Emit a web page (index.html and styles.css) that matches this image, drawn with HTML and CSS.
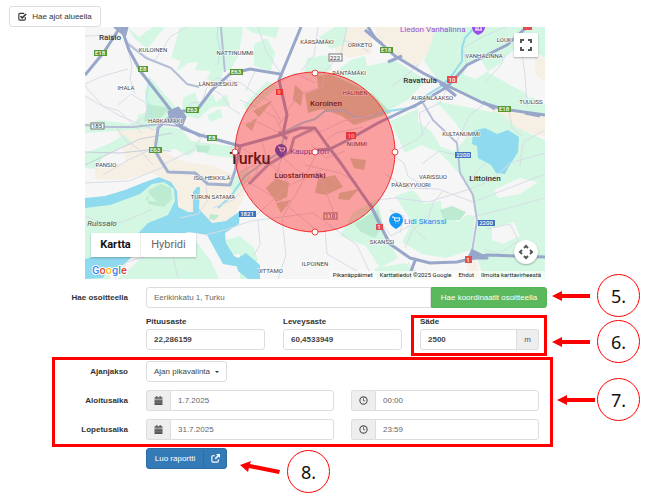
FILE: index.html
```html
<!DOCTYPE html>
<html lang="fi">
<head>
<meta charset="utf-8">
<meta name="viewport" content="width=device-width, initial-scale=1">
<title>Hae ajot alueella</title>
<link rel="stylesheet" href="styles.css">
</head>
<body>
<main class="page">
  <button type="button" class="btn btn-area">
    <svg class="icon" viewBox="0 0 16 16" aria-hidden="true"><path d="M13 9v3.500a2 2 0 0 1-2 2H3.500a2 2 0 0 1-2-2V4.500a2 2 0 0 1 2-2H11" fill="none" stroke="currentColor" stroke-width="2"/><path d="M4.500 7.500l3 3L14.500 3.500" fill="none" stroke="currentColor" stroke-width="2.800"/></svg>
    Hae ajot alueella
  </button>

  <section class="map" aria-label="Kartta">
    <svg class="map-canvas" viewBox="85 27 460 252" role="img" aria-label="Turku">
      <rect class="land" x="85" y="27" width="460" height="252"/>
      <!-- built-up areas -->
      <g class="sand">
        <path d="M117 129l39-3 1 22 28 14 30 4 25 12 5 18-13 24-25 3-28-13-7-27-20-10-32 7-25-1 0-13 32-3z"/>
        <path d="M341 27l32 0 22 22 30-22-53 0 0 26-24 5-13-8z"/>
        <path d="M384 27h52l-1 18-18 22-27-14-17-18z"/>
        <path d="M485 105l60 10v22l-35-10zM535 56l10 3v23l-10-8z"/>
        <path d="M206 77l14 0 2 8-12 3zM430 187l12-2 2 8-12 2zM466 260l10 0 4 19-10 0z"/>
      </g>
      <!-- woods and parks -->
      <g class="green">
        <path d="M180 27h63l-4 27-8 15-8 3-3 10-12-2 2-9-15-1 3-8-10 1-12 9 5-11-10-3z"/>
        <path d="M127 27l12 10 14-10h12l-18 22-13-11z"/>
        <path d="M149 76l28 33-2 14-12 0-13 5-15-1 3-12 9-3-2-20z"/>
        <path d="M156 126l25 3 10 12 47 6-4 11-26-3-9-6-11 7-13-7-18 2z"/>
        <path d="M183 98l12-6 4 12 14-10 3 8 11-8 3 12-18 1-14 12-16-4zM207 115l13-6 3 8-13 5z"/>
        <path d="M85 124l15-4 28 4 25-4 3 8-71 5z"/>
        <path d="M85 153l21-8 19-10 7 7-29 14-6 13-12-1z"/>
        <path d="M254 44l13-6 8 15-4 18-17-5zM245 27l34 0-3 11-23-5zM267 81l11 6-14 12-17 14-3-8zM319 37l16-10 12 0-2 17-14 5zM351 60l14-4 3 16-22 6-7-9z"/>
        <path d="M307 58l20-3 5 14-15 9-13-5z"/>
        <path d="M340 73l54-13 32 20-18 20-30 16-32-6-12-21z"/>
        <path d="M436 27h109v31l-18-11-40 25 58 32v11l-46-8-57-21-18-25 6-14z"/>
        <path d="M390 121l46-20 66 13 15 14 28 12v139h-61l-10-30 5-30-12-37-27-29-18-8-17 8z"/>
        <path d="M353 213l24-14 8 34 13 25-18 10-14-22-26-10z"/>
        <path d="M375 268l30-5 20 16h-49zM85 232l14 2 11 8v37H85z"/>
        <path d="M225 240l15-4v18l-9 1zM240 236l14 12 4 12-10 19h-8zM238 173l10-7 2 12-15 16-5-7z"/>
        <path d="M395 196l18-6 12 14 20-4 10 12 20 4-4 34-25 8-24-4-20-12 10-20z"/>
      </g>
      <!-- neighbourhoods inside the eastern woods -->
      <g class="land">
        <path d="M418 108l16-8 18 18 14 20-12 14-14-6-8-14-14-10zM466 65l14-6 8 12-12 8-12-4zM500 62l16-14 14 10-4 12-16 4zM524 78l14 4 2 14-12 2zM440 196l16 4 12 14-10 8-16-12zM492 228l22-6 6 14-18 8-10-4zM400 160l22-4 12 16 22-2 8 14-24 10-34-4-8-14zM494 190l26-12 18 4-18 12-22 4z"/>
      </g>
      <!-- sea, lakes -->
      <g class="water">
        <path d="M85 198l20-2 20-6 20-8 14-5 12 5 6 9 1 16 10 5 6 0-1-15 4-10 2 0 0 22 13 14 14-2 14-10-1 13-14 9 1 10 8 13 12 6v6l-23-4-16-29-18-3-18 4-28 11-20 18-38 14z"/>
        <path d="M193 192l4-5h3l-1 21-6 5zM473 131l12-3 12 6 11-4 11 7-1 15-10 16-3 6-9-1-5-8-13-7-1-12-5-2zM85 258l14-6 14 6-10 20-18 1zM235 260l11-7 14 12 0 14h-12l-10-8z"/>
      </g>
      <path class="green" d="M85 208l25-3 30-11 12-10 12-2 10 7 1 12-7 14-20 8-23 24-40 12zM118 279l27-24 15-14 25-5 12 7 14 18 8 18z"/>
      <path class="wood" d="M149 190l12-6 10 4 1 11-8 8-16-3zM147 104l23 4-9 10-17 4zM196 145l14 1-2 7-11-1zM157 202l-8-8-4 6zM440 210l12-4 14 6-6 8-16 0zM354 224l24-15 5 16-8 13-14-6zM210 214l9 1-4 5-6-1z"/>
      <g class="wood olive">
        <path d="M317 76l13-2 43 20 18 19-37 12-12-9-20-7-14 4-3-19 13-5zM295 85l8 7-2 14-8-6zM253 111l20-11-14 17zM318 179l17-4 8 12-17 8-11-2zM339 193l20-4-10 11-11-1zM266 188l10-10 13 5-2 14-11 5zM276 203l15-3-10 13zM245 125l12-7-5 13zM350 158l16 2-2 10-10-2z"/>
      </g>
      <path class="river" d="M475 27l-10 11-3 10 0 13-12 17-10 9-13 8-12 12-32 5-13 5-15 0-12-7-18 1-10 8-13 4-16 8-7 22-16 10-18 13-14 20-13 12"/>
      <path class="river stream" d="M218 27l-1 9 3 14-2 15M150 79l-4 20 6 10-3 15"/>
      <!-- minor streets -->
      <g class="street">
        <path d="M85 36l33-1M128 42l20 16 22 9 18 18 18 1 11-8 24 5 13 10 15 8 12 20M155 60l7-10 8-13 17-10M85 86l18 20 16 5 23 22M85 96l35 20 35 14M128 49l4 17-2 13 5 15M118 105l13-11 15 9 1 12-12 8M180 118l12-15 10-1 5-15M213 90l9 5 7 12 11 7M85 84l18-8 25-7M117 128l8 12 15 10 13 15M103 175l27-16 22-10 10 16 31-15 12-18M85 183l44-2 37-15M205 180l3 20-10 14-18 4M213 208l20-8 18-19M235 166l-4-20"/>
        <path d="M258 27l8 24 18 27M318 27l-4 28-13 16M347 27l-6 27-17 18-1 15-25 8-19 30M342 40l16 4 11 8M280 82l15-9 20 10M240 100l18 8 17 9 8 16M246 91l9-20M240 172l38-19 20 18 24 9 12 34M247 181l38 23 29 24M255 216l35-31 33-16M240 156l28 3 20 20M290 129l-16 54M301 133l22-2 20-10 31-6M305 165l35 8 18 10M318 150l-15 31-20 35M322 143l14-10 27-6M283 134l-26-12-11 1M235 144l25 15-4 15-15 12M262 142l6 20 23 23M311 145l15 13 19-7"/>
        <path d="M85 216l20 8 18-2 30-13M115 279l12-17 24-7 25-17 22 8M178 279l-5-23 18-15M205 235l20-5 26-9 62-8 44 32 14 30M282 219l4 36-8 24M325 230l2 24 30 17M258 220l2 25-6 10M385 174l22 14 31 1 35 13 72-28M390 153l14 10 4 13 20 13M377 200l18-2 33 4 39-12 25-10 18-17 35-10M475 216l22-5 48-13M405 248l8-19 15-10 5-16 10-12M371 210l20 26 20-11 15 15M408 263l15 16M390 210l14 6-4 17"/>
        <path d="M391 87l17-13 11-10M467 67l-4-19 21-12 22-9M485 82l15-16 6-12M522 53l3 22 2 31M447 88l-7 15-21 10 4 23M456 143l14-28 13-10M430 121l-12 18-19 10M509 111l3 17 10 8M457 155l-18-4-17 13M465 185l20-22M487 229l23-5 7 14M484 249l15 5 20-14M545 130l-22 12-3 24"/>
      </g>
      <path class="road thin" d="M85 152l35 1 28-3 23 1M85 165l55-26 32-6"/>
      <path class="road mid" d="M85 125l23 2 25 0 28-3 24 3 15 10M128 44l18 14 25 10 16 16 12 3M423 103l10 17 24 23 3 30 13 22 4 25-5 32M221 27l2 25 2 20"/>
      <!-- main roads -->
      <g class="road">
        <path class="secondary" d="M170 117l-12 11-3 22 5 9 8 13 27 1 13 11 22 1 5-14 5-24M315 128l-21 10-4 14-21 12-20 20"/>
        <path d="M121 27l8 23 12 22 32 41 9 15 18 7 40 11 43-12 17-6 15 0 12 17 13 17 32 46 8 17 10 19 20 14 20 5 27-1 30-7 58 2"/>
        <path d="M119 29l-15 23-19 23M172 112l25-2 15-20 18-16 20-5 30 5M301 27l-22 53 8 35-4 19M368 27l7 11 20 18 28 17 27 14 33 16 20 6 42 6M527 27l-20 18-40 20-20 22-27 16-42 20-30 17-18 9-13 1"/>
        <path class="junction" d="M115 27h12l-2 8zM169 112l9-4 7 9-4 10-10-8zM365 30l17 14M388 62l14-6M440 83l16 13M483 102l12 7M279 132l8 7M370 204l12 24M467 258l20 0-16-8M416 258l-5 13M525 113l15 3"/>
      </g>
      <!-- road shields -->
      <g class="e-road"><rect x="94" y="50" width="13" height="6"/><rect x="138" y="66" width="10" height="6"/><rect x="186" y="107" width="13" height="6"/><rect x="230" y="69" width="13" height="6"/><rect x="207" y="135" width="10" height="6"/><rect x="149" y="147" width="13" height="6"/><rect x="380" y="47" width="13" height="6"/><rect x="498" y="106" width="13" height="6"/></g>
      <g class="main-road"><rect x="276" y="89" width="7" height="6"/><rect x="346" y="132" width="10" height="7"/><rect x="447" y="76" width="10" height="7"/><rect x="523" y="24" width="9" height="6"/><rect x="376" y="224" width="7" height="6"/><rect x="465" y="256" width="7" height="7"/></g>
      <g class="region-road"><rect x="239" y="211" width="17" height="6"/><rect x="455" y="152" width="16" height="6"/><rect x="478" y="220" width="17" height="6"/></g>
      <g class="local-road"><rect x="91" y="123" width="13" height="6"/><rect x="329" y="54" width="13" height="7"/><rect x="324" y="213" width="13" height="6"/></g>
      <g class="shield-text">
        <text x="100" y="55">E18</text><text x="143" y="71">E8</text><text x="192" y="112">E63</text><text x="236" y="74">E63</text><text x="212" y="140">E8</text><text x="155" y="152">E63</text><text x="386" y="52">E18</text><text x="504" y="111">E18</text>
        <text x="279" y="94">9</text><text x="351" y="138">10</text><text x="452" y="82">10</text><text x="379" y="229">1</text><text x="468" y="262">1</text>
        <text x="247" y="216">1821</text><text x="463" y="157">2200</text><text x="486" y="225">2200</text>
      </g>
      <g class="shield-text dark"><text x="97" y="128">185</text><text x="335" y="60">222</text><text x="330" y="218">110</text></g>
      <!-- place names -->
      <g class="district">
        <text x="153" y="52">KULOINEN</text><text x="235" y="55">NÄTTINUMMI</text><text x="126" y="90">IHALA</text><text x="218" y="86">LÄNSIKESKUS</text><text x="165" y="123">HÄRKÄMÄKI</text>
        <text x="317" y="44">KÄRSÄMÄKI</text><text x="360" y="47">ORIKETO</text><text x="349" y="75">RÄNTÄMÄKI</text><text x="355" y="95">HALINEN</text><text x="357" y="146">NUMMI</text>
        <text x="505" y="42">LOUKI</text><text x="484" y="58">VANHALINNA</text><text x="432" y="100">AURANLAAKSO</text><text x="531" y="104">TUULISS</text><text x="461" y="136">KULTANUMMI</text>
        <text x="106" y="167">PANSIO</text><text x="212" y="180">ISO-HEIKKILÄ</text><text x="213" y="199">TURUN SATAMA</text><text x="433" y="179">VARISSUO</text><text x="411" y="187">PÄÄSKYVUORI</text><text x="382" y="244">SKANSSI</text><text x="315" y="266">ILPOINEN</text><text x="270" y="273">UITTAMO</text>
      </g>
      <g class="town"><text x="110" y="40">Raisio</text><text x="326" y="106">Koroinen</text><text x="300" y="178">Luostarinmäki</text><text x="420" y="83">Ravattula</text><text x="485" y="181">Littoinen</text><text x="102" y="226" class="island">Ruissalo</text></g>
      <text class="city" x="250" y="164">Turku</text>
      <g class="poi">
        <text x="290" y="154" class="market">Kauppatori</text><text x="404" y="224" class="shop">Lidl Skanssi</text><text x="400" y="32" class="sight">Liedon Vanhalinna</text>
      </g>
      <g class="pins">
        <path d="M275 150a6 6 0 1 1 12 0q0 4-6 8-6-4-6-8z" fill="#3d5ccc"/><path class="glyph" d="M278 147h1.500l1 4h3.500l1-3h-5M281 153h.5M284 153h.5"/>
        <path d="M389 220a7 7 0 1 1 14 0q0 5-7 9-7-4-7-9z" fill="#1399f5"/><path class="glyph" d="M392 217h2l1 4h4l1-3h-6M395 223h.5M398 223h.5"/>
        <path d="M472 27h13q0 5-7 8-6-3-6-8z" fill="#9a4ee8"/><path class="glyph" d="M475 30h7M476 27v3M478 27v3M481 27v3"/>
      </g>
      <circle class="area" cx="315" cy="152" r="80"/>
      <g class="handles"><circle cx="315" cy="73" r="3"/><circle cx="395" cy="152" r="3"/><circle cx="315" cy="232" r="3"/><circle cx="235" cy="152" r="3"/><circle cx="315" cy="152" r="3"/></g>
      <text class="google" x="92" y="274"><tspan fill="#4285f4">G</tspan><tspan fill="#ea4335">o</tspan><tspan fill="#fbbc05">o</tspan><tspan fill="#4285f4">g</tspan><tspan fill="#34a853">l</tspan><tspan fill="#ea4335">e</tspan></text>
    </svg>
    <div class="map-type"><button type="button" class="active">Kartta</button><button type="button">Hybridi</button></div>
    <button type="button" class="map-full" aria-label="Koko näyttö"><svg viewBox="0 0 12 12"><path d="M1 4V1h3M8 1h3v3M11 8v3H8M4 11H1V8" fill="none" stroke="#555" stroke-width="2"/></svg></button>
    <button type="button" class="map-pan" aria-label="Siirrä karttaa"><svg viewBox="0 0 16 16"><path d="M6 4l2-2 2 2M6 12l2 2 2-2M4 6L2 8l2 2M12 6l2 2-2 2" fill="none" stroke="#555" stroke-width="2"/></svg></button>
    <div class="map-legal"><button type="button">Pikanäppäimet</button><span>Karttatiedot ©2025 Google</span><a href="#ehdot">Ehdot</a><a href="#virhe">Ilmoita karttavirheestä</a></div>
  </section>

  <form class="report">
    <div class="row">
      <label class="row-label" for="address">Hae osoitteella</label>
      <div class="group wide">
        <input id="address" type="text" value="Eerikinkatu 1, Turku">
        <button type="button" class="btn btn-green">Hae koordinaatit osoitteella</button>
      </div>
      <div class="callout callout-five"><svg class="arrow" viewBox="0 0 38 10" aria-hidden="true"><path d="M0 5L10 0V3H38V7H10V10z"/></svg><span class="number">5.</span></div>
    </div>

    <div class="row coords">
      <div class="thirds">
        <div class="field"><label for="lon">Pituusaste</label><input id="lon" type="text" value="22,286159"></div>
        <div class="field"><label for="lat">Leveysaste</label><input id="lat" type="text" value="60,4533949"></div>
        <div class="field marked"><label for="radius">Säde</label><div class="group"><input id="radius" type="text" value="2500"><span class="addon unit">m</span></div></div>
      </div>
      <div class="callout callout-six"><svg class="arrow" viewBox="0 0 38 10" aria-hidden="true"><path d="M0 5L10 0V3H38V7H10V10z"/></svg><span class="number">6.</span></div>
    </div>

    <div class="period">
      <div class="row">
        <label class="row-label" for="quick">Ajanjakso</label>
        <div class="select"><select id="quick"><option>Ajan pikavalinta</option></select></div>
      </div>
      <div class="row">
        <label class="row-label" for="start">Aloitusaika</label>
        <div class="halves">
          <div class="group"><span class="addon"><svg class="icon" viewBox="0 0 16 16" aria-hidden="true"><path d="M1 2h3V0h2v2h4V0h2v2h3v3H1zM1 6h14v10H1z"/><path d="M1 8.500h14M1 12h14" stroke="#999"/></svg></span><input id="start" type="text" value="1.7.2025"></div>
          <div class="group"><span class="addon"><svg class="icon" viewBox="0 0 16 16" aria-hidden="true"><circle cx="8" cy="8" r="6.500" fill="none" stroke="currentColor" stroke-width="2"/><path d="M8 4v4.500h3" fill="none" stroke="currentColor" stroke-width="1.500"/></svg></span><input type="text" aria-label="Aloitusaika, kello" value="00:00"></div>
        </div>
        <div class="callout callout-seven"><svg class="arrow" viewBox="0 0 38 10" aria-hidden="true"><path d="M0 5L10 0V3H38V7H10V10z"/></svg><span class="number">7.</span></div>
      </div>
      <div class="row">
        <label class="row-label" for="end">Lopetusaika</label>
        <div class="halves">
          <div class="group"><span class="addon"><svg class="icon" viewBox="0 0 16 16" aria-hidden="true"><path d="M1 2h3V0h2v2h4V0h2v2h3v3H1zM1 6h14v10H1z"/><path d="M1 8.500h14M1 12h14" stroke="#999"/></svg></span><input id="end" type="text" value="31.7.2025"></div>
          <div class="group"><span class="addon"><svg class="icon" viewBox="0 0 16 16" aria-hidden="true"><circle cx="8" cy="8" r="6.500" fill="none" stroke="currentColor" stroke-width="2"/><path d="M8 4v4.500h3" fill="none" stroke="currentColor" stroke-width="1.500"/></svg></span><input type="text" aria-label="Lopetusaika, kello" value="23:59"></div>
        </div>
      </div>
    </div>

    <div class="row actions">
      <div class="group">
        <button type="submit" class="btn btn-blue">Luo raportti</button>
        <button type="button" class="btn btn-blue btn-open" aria-label="Avaa uuteen ikkunaan"><svg class="icon" viewBox="0 0 16 16" aria-hidden="true"><path d="M13 9.500v3a2 2 0 0 1-2 2H3.500a2 2 0 0 1-2-2V5a2 2 0 0 1 2-2H7" fill="none" stroke="currentColor" stroke-width="2"/><path d="M9 0h7v7l-2.500-2.500L8.500 9.500l-2-2 5-5z" fill="currentColor"/></svg></button>
      </div>
      <div class="callout callout-eight"><svg class="arrow slanted" viewBox="0 0 40 14" aria-hidden="true"><path d="M0 4L11 0L10 3L40 9L39 13L9 7L8 11z"/></svg><span class="number">8.</span></div>
    </div>
  </form>
</main>
</body>
</html>
```
FILE: styles.css
```css
* { box-sizing: border-box; }

body {
  margin: 0;
  background: #fff;
  color: #333;
  font: 8px/12px "Liberation Sans", Arial, sans-serif;
}

button, input, select { margin: 0; font: inherit; color: inherit; }

.page { min-height: 100vh; padding: 6px 111px 8px 9px; }

.icon { width: 9px; height: 9px; fill: currentColor; flex: none; }

.btn {
  display: inline-flex;
  align-items: center;
  justify-content: center;
  height: 21px;
  padding: 0 7px;
  border: 1px solid #ddd;
  border-radius: 3px;
  background: #fff;
  white-space: nowrap;
}

.btn-area { display: flex; gap: 5px; width: 92px; padding: 0; }

/* Map */
.map { position: relative; margin: 0 2px 8px 76px; font-family: Roboto, sans-serif; }
.map-canvas { display: block; width: 100%; height: auto; }
.land { fill: #f7f6f7; }
.sand { fill: #f5efe4; }
.green { fill: #d3f7e2; }
.wood { fill: #bdebd1; }
.olive { fill: #c3dbb8; }
.water { fill: #8fdaee; }
.river { fill: none; stroke: #98dcec; stroke-width: 2; }
.stream { stroke: #b4e5f0; stroke-width: 1; }
.street { fill: none; stroke: #d8dde7; stroke-width: 1; }
.road { fill: none; stroke: #98a7c9; stroke-width: 3; stroke-linejoin: round; }
.secondary { stroke: #a3b0cf; }
.mid { stroke: #b5bfd5; stroke-width: 2; }
.thin { stroke: #c8cedb; stroke-width: 1; }
.junction { fill: #98a7c9; }
.e-road { fill: #55983c; }
.main-road { fill: #e14d50; }
.region-road { fill: #3e73bd; }
.local-road { fill: #fff; stroke: #777; stroke-width: 1; }
.shield-text { fill: #fff; font-size: 6px; font-weight: 500; text-anchor: middle; }
.dark { fill: #555; }
.district { fill: #444; font-size: 6px; text-anchor: middle; stroke: #fff; stroke-width: 1; paint-order: stroke; }
.town { fill: #333; font-size: 8px; font-weight: 500; text-anchor: middle; }
.island { font-style: italic; font-weight: 400; fill: #555; }
.city { fill: #222; font-size: 16px; font-weight: 500; text-anchor: middle; }
.poi { font-size: 8px; }
.market { fill: #4b5fcf; }
.shop { fill: #2684ee; }
.sight { fill: #9153dc; }
.glyph { fill: none; stroke: #fff; }
.area { fill: #ff0000; fill-opacity: .35; stroke: #f52c2c; stroke-width: 1; }
.handles { fill: #fff; stroke: #ee4444; stroke-width: 1; }
.google { font-size: 11px; font-weight: 500; stroke: #fff; stroke-width: 2; paint-order: stroke; }

.map button { border: 0; padding: 0; background: #fff; }
.map-type {
  position: absolute;
  left: 6px;
  bottom: 22px;
  display: flex;
  height: 24px;
  box-shadow: 0 1px 2px rgba(0, 0, 0, .25);
  font-size: 11px;
}
.map-type button { width: 55px; color: #666; }
.map-type .active { width: 50px; color: #111; font-weight: 700; border-right: 1px solid #eee; }
.map-full, .map-pan {
  position: absolute;
  right: 7px;
  width: 24px;
  height: 24px;
  display: grid;
  place-items: center;
  box-shadow: 0 1px 2px rgba(0, 0, 0, .3);
}
.map-full { top: 6px; border-radius: 1px; }
.map-full svg { width: 12px; height: 12px; }
.map .map-pan { bottom: 15px; border-radius: 50%; }
.map-pan svg { width: 16px; height: 16px; }
.map-legal {
  position: absolute;
  right: 0;
  bottom: 0;
  display: flex;
  gap: 7px;
  padding: 0 4px;
  background: rgba(255, 255, 255, .6);
  color: #222;
  font-size: 6px;
  line-height: 8px;
  white-space: nowrap;
}
.map .map-legal button { background: none; }
.map-legal a { color: inherit; text-decoration: none; }

/* Form */
.row { position: relative; display: flex; align-items: center; gap: 18px; padding-right: 8px; }
.row-label { flex: none; width: 119px; text-align: right; }
label { font-weight: 700; }

input, select {
  width: 100%;
  min-width: 0;
  height: 21px;
  padding: 0 7px;
  border: 1px solid #ddd;
  border-radius: 3px;
  background: #fff;
  color: #666;
}

.group { display: flex; flex: 1; min-width: 0; }
.wide { margin-right: -8px; }
.group > :not(:last-child) { border-top-right-radius: 0; border-bottom-right-radius: 0; }
.group > :not(:first-child) { border-top-left-radius: 0; border-bottom-left-radius: 0; }
.btn-green { flex: none; width: 116px; border-color: #56b456; background: #5cb85c; color: #fff; }

.coords { margin-top: 7px; padding-left: 137px; }
.thirds { flex: 1; display: grid; grid-template-columns: repeat(3, 1fr); gap: 18px; }
.field label { display: block; line-height: 14px; }
.field input { color: #444; font-weight: 700; }
.marked { position: relative; }
.marked::after {
  content: "";
  position: absolute;
  inset: 0 -8px -6px -9px;
  border: 3px solid #f00;
  pointer-events: none;
}

.addon {
  flex: none;
  display: grid;
  place-items: center;
  width: 24px;
  border: 1px solid #ddd;
  border-right: 0;
  border-radius: 3px;
  background: #eee;
  color: #555;
}
.unit { width: 22px; border-right: 1px solid #ddd; border-left: 0; }

.period { position: relative; display: grid; gap: 8px; margin-top: 11px; }
.period::before {
  content: "";
  position: absolute;
  inset: -4px -6px -7px 43px;
  border: 3px solid #f00;
  pointer-events: none;
}
.select { position: relative; width: 81px; }
.select select { appearance: none; color: #444; }
.select::after {
  content: "";
  position: absolute;
  top: 10px;
  right: 8px;
  border: 2px solid transparent;
  border-top-color: #333;
  pointer-events: none;
}
.halves { flex: 1; display: grid; grid-template-columns: 1fr 1fr; gap: 17px; }

.actions { margin-top: 8px; padding-left: 137px; }
.btn-blue { width: 58px; border-color: #2e6da4; background: #337ab7; color: #fff; }
.btn-open { width: 24px; margin-left: -1px; padding: 0; }

/* Numbered callouts beside the form */
.callout { position: absolute; display: flex; align-items: center; gap: 7px; }
.arrow { width: 38px; height: 10px; fill: #f00; }
.slanted { width: 40px; height: 14px; margin-bottom: 8px; }
.number {
  display: grid;
  place-items: center;
  width: 43px;
  height: 43px;
  border: 1px solid #f00;
  border-radius: 50%;
  color: #111;
  font: 18px/24px "Noto Sans", sans-serif;
}
.callout-five { left: 543px; top: -13px; }
.callout-six { left: 543px; top: 5px; }
.callout-seven { left: 548px; top: -12px; gap: 2px; }
.callout-eight { left: 231px; top: 2px; }
```
